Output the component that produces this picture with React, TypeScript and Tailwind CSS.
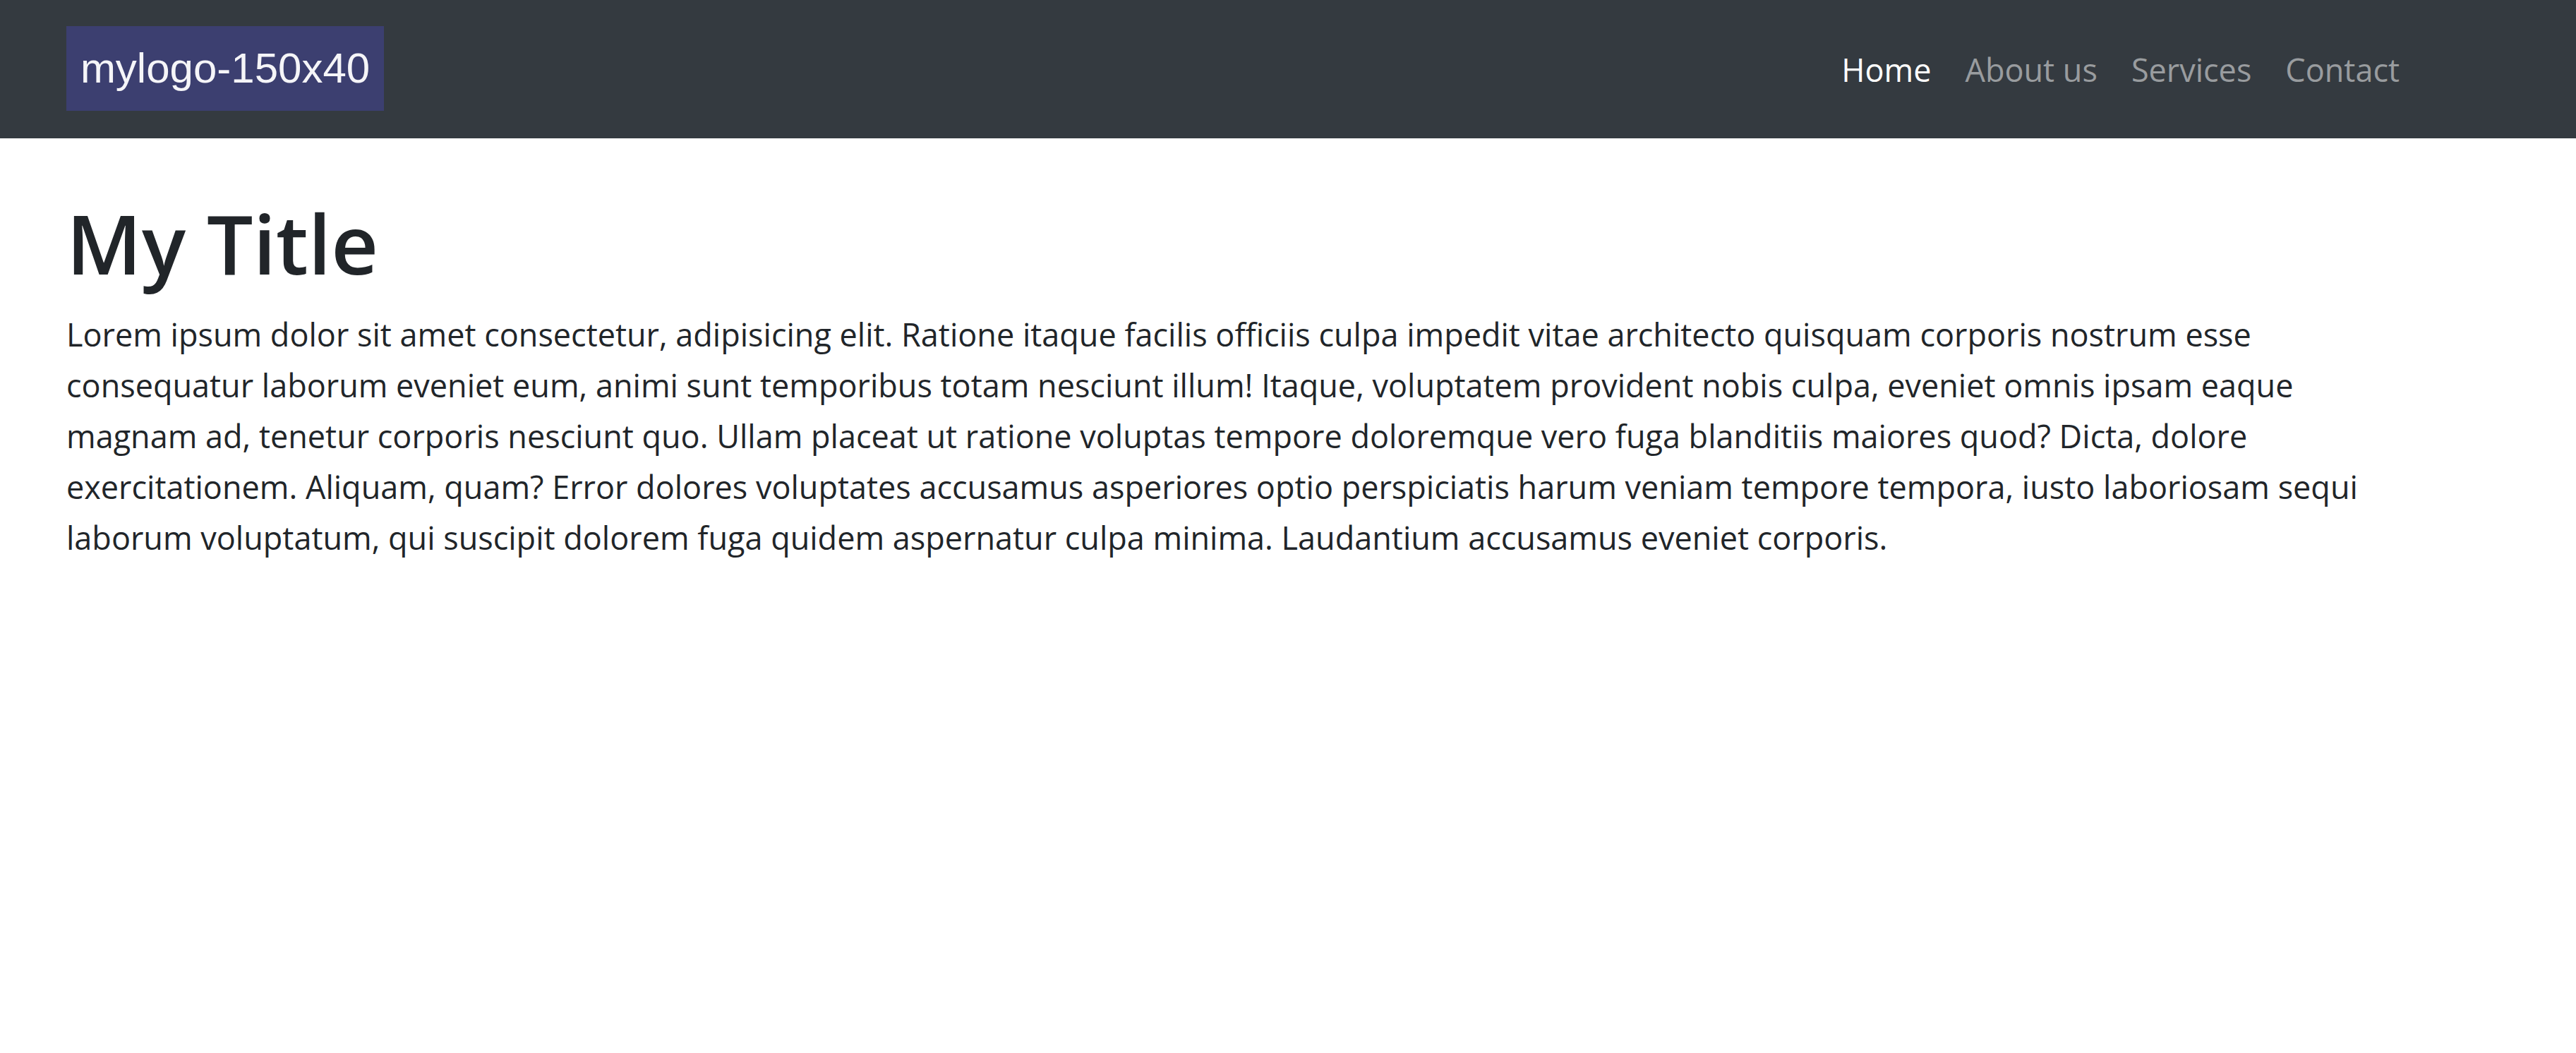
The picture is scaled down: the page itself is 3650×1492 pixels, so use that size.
const links = [
  { label: "Home", active: true },
  { label: "About us", active: false },
  { label: "Services", active: false },
  { label: "Contact", active: false },
];

export default function App() {
  return (
    <div className="min-h-screen bg-white font-['Segoe_UI','Open_Sans',sans-serif] text-[45px] leading-[72px] text-[#212529]">
      <header className="bg-[#343a40] pt-[37px] pb-[39px]">
        <div className="ml-[49px] flex max-w-[3420px] items-center justify-between px-[45px]">
          <a
            href="#"
            className="flex h-[120px] w-[450px] items-center justify-center bg-[#3c3f70] font-['Liberation_Sans',Arial,sans-serif] text-[60px] text-[#f5f5f8]"
          >
            mylogo-150x40
          </a>
          <nav className="pt-1">
            <ul className="flex">
              {links.map((link) => (
                <li key={link.label}>
                  <a
                    href="#"
                    aria-current={link.active ? "page" : undefined}
                    className={link.active ? "block px-6 text-white" : "block px-6 text-white/50"}
                  >
                    {link.label}
                  </a>
                </li>
              ))}
            </ul>
          </nav>
        </div>
      </header>
      <main className="ml-[49px] max-w-[3420px] px-[45px] pt-[76px]">
        <h1 className="mb-[22px] text-[116px] leading-[144px] font-semibold">My Title</h1>
        <p>
          Lorem ipsum dolor sit amet consectetur, adipisicing elit. Ratione itaque facilis officiis culpa impedit vitae
          architecto quisquam corporis nostrum esse consequatur laborum eveniet eum, animi sunt temporibus totam
          nesciunt illum! Itaque, voluptatem provident nobis culpa, eveniet omnis ipsam eaque magnam ad, tenetur
          corporis nesciunt quo. Ullam placeat ut ratione voluptas tempore doloremque vero fuga blanditiis maiores
          quod? Dicta, dolore exercitationem. Aliquam, quam? Error dolores voluptates accusamus asperiores optio
          perspiciatis harum veniam tempore tempora, iusto laboriosam sequi laborum voluptatum, qui suscipit dolorem
          fuga quidem aspernatur culpa minima. Laudantium accusamus eveniet corporis.
        </p>
      </main>
    </div>
  );
}
